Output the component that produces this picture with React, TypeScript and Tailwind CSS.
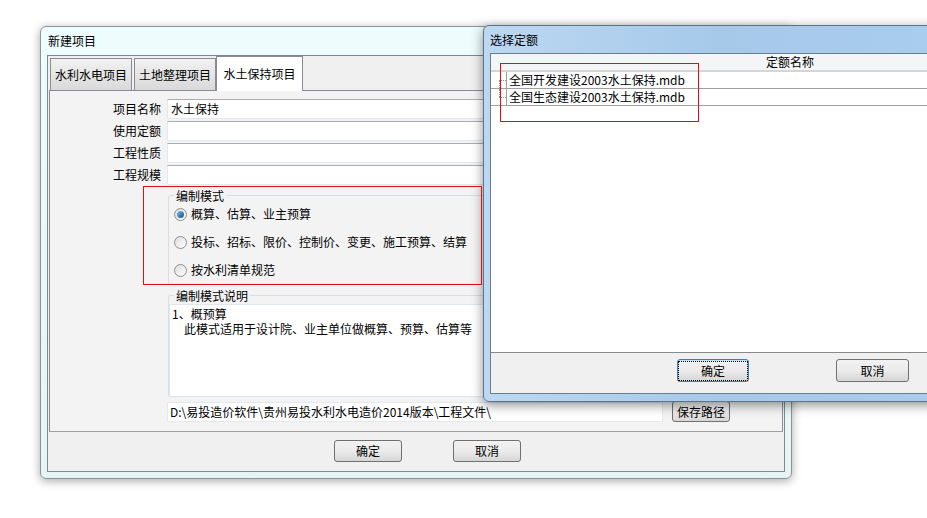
import React from "react";

const font = "font-['Noto_Sans_CJK_SC',sans-serif]";

function WinButton({ label, focused = false, className = "" }: { label: string; focused?: boolean; className?: string }) {
  return (
    <div
      className={`flex items-center justify-center rounded-[3px] border text-[12px] leading-none text-black bg-gradient-to-b from-[#f2f2f2] via-[#ebebeb] to-[#d6d6d6] ${
        focused ? "border-[#3c7fb1] shadow-[inset_0_0_0_1px_#bfe4f8]" : "border-[#707070]"
      } ${className}`}
    >
      <span className={focused ? "outline-1 outline-dotted outline-black px-[22px] py-[3px]" : ""}>{label}</span>
    </div>
  );
}

function Radio({ checked, label }: { checked?: boolean; label: string }) {
  return (
    <div className="flex items-center h-[28px] pl-[5px] gap-[4px]">
      <div className="w-[13px] h-[13px] rounded-full border border-[#8e8f8f] bg-gradient-to-br from-[#dcdcdc] to-[#ffffff] flex items-center justify-center">
        {checked && <div className="w-[7px] h-[7px] rounded-full bg-gradient-to-br from-[#7fc0f0] to-[#0d4c8a]" />}
      </div>
      <span className="text-[12px] text-black">{label}</span>
    </div>
  );
}

function Field({ label, value }: { label: string; value?: string }) {
  return (
    <div className="flex items-center h-[20px] mb-[2px]">
      <div className="w-[112px] text-right text-[12px] text-black pr-[1px]">{label}</div>
      <div className="ml-[5px] w-[612px] h-[20px] bg-white border border-[#e3e9ef] border-t-[#abadb3] flex items-center pl-[3px] text-[12px] text-black">
        {value}
      </div>
    </div>
  );
}

function NewProjectWindow() {
  return (
    <div className="absolute left-[40px] top-[26px] w-[752px] h-[453px] rounded-[6px] border border-[#8c9499] bg-gradient-to-b from-[#eefcfd] to-[#e6f4f6] shadow-[0_2px_10px_rgba(0,0,0,0.35)] flex flex-col">
      <div className="h-[28px] pl-[7px] flex items-center text-[12px] text-black">新建项目</div>
      <div className="mx-[6px] h-[417px] border border-[#7f8890] bg-[#f0f0f0] flex flex-col">
        {/* tabs */}
        <div className="h-[34px] flex items-end pl-[2px]">
          <div className="h-[32px] w-[82px] border border-b-0 border-[#898c95] bg-gradient-to-b from-[#f2f2f2] to-[#d9d9d9] flex items-center justify-center text-[12px]">水利水电项目</div>
          <div className="h-[32px] w-[82px] ml-[2px] border border-b-0 border-[#898c95] bg-gradient-to-b from-[#f2f2f2] to-[#d9d9d9] flex items-center justify-center text-[12px]">土地整理项目</div>
          <div className="relative z-10 -mb-px h-[35px] w-[87px] border border-b-0 border-[#898c95] bg-white flex items-center justify-center text-[12px]">水土保持项目</div>
        </div>
        {/* tab panel */}
        <div className="h-[342px] mx-[1px] border border-[#898c95] border-b-[#a0a0a0] bg-[#f3f3f3] pt-[8px] flex flex-col">
          <Field label="项目名称" value="水土保持" />
          <Field label="使用定额" />
          <Field label="工程性质" />
          <Field label="工程规模" />
          <fieldset className="ml-[118px] w-[610px] h-[98px] border border-[#d5dfe5] rounded-[3px]">
            <legend className="ml-[5px] px-[2px] text-[12px] leading-[17px]">编制模式</legend>
            <div className="-mt-[4px]">
              <Radio checked label="概算、估算、业主预算" />
              <Radio label="投标、招标、限价、控制价、变更、施工预算、结算" />
              <Radio label="按水利清单规范" />
            </div>
          </fieldset>
          <fieldset className="ml-[118px] mt-[2px] w-[610px] border border-[#d5dfe5] border-b-0 rounded-[3px]">
            <legend className="ml-[5px] px-[2px] text-[12px] leading-[17px]">编制模式说明</legend>
            <div className="h-[93px] bg-white border border-[#dfe6ec] pl-[2px] pt-[1px] text-[12px] leading-[15px] text-black">
              <div>1、概预算</div>
              <div className="pl-[12px]">此模式适用于设计院、业主单位做概算、预算、估算等</div>
            </div>
          </fieldset>
          <div className="flex items-center mt-[4px] ml-[117px]">
            <div className="w-[496px] h-[20px] bg-white border border-[#e3e9ef] flex items-center pl-[2px] text-[12px] text-black">
              D:\易投造价软件\贵州易投水利水电造价2014版本\工程文件\
            </div>
            <WinButton label="保存路径" className="ml-[9px] w-[58px] h-[21px] rounded-[2px]" />
          </div>
        </div>
        <div className="flex pt-[8px] pl-[286px] gap-[51px]">
          <WinButton label="确定" className="w-[68px] h-[22px]" />
          <WinButton label="取消" className="w-[68px] h-[22px]" />
        </div>
      </div>
    </div>
  );
}

function SelectQuotaWindow() {
  return (
    <div className="absolute left-[483px] top-[25px] w-[470px] h-[377px] rounded-[6px] border border-[#5d7387] bg-gradient-to-r from-[#bcd8f2] via-[#a6c9ea] to-[#a9cdef] shadow-[0_3px_12px_rgba(0,0,0,0.45)] flex flex-col">
      <div className="h-[27px] pl-[6px] flex items-center text-[12px] text-black">选择定额</div>
      <div className="ml-[6px] h-[341px] border border-[#6b7d8e] bg-[#f0f0f0] flex flex-col">
        <div className="h-[298px] bg-white flex flex-col">
          <div className="h-[18px] bg-[#f4f5f6] border-b-2 border-[#d5d5d5] flex items-center pl-[275px] text-[12px] text-black">定额名称</div>
          {["全国开发建设2003水土保持.mdb", "全国生态建设2003水土保持.mdb"].map((name, i) => (
            <div key={name} className="h-[17px] flex border-b border-[#a0a0a0]">
              <div className="w-[15px] relative">
                <div className="absolute left-[8px] top-[8px] w-[7px] border-t border-dotted border-[#909090]" />
                <div className={`absolute left-[8px] border-l border-dotted border-[#909090] ${i === 0 ? "top-[8px] h-[10px]" : "top-0 h-[8px]"}`} />
              </div>
              <div className="border-l border-[#a0a0a0] pl-[2px] flex items-center text-[12px] text-black">{name}</div>
            </div>
          ))}
        </div>
        <div className="flex-1 border-t border-[#8a8a8a] flex items-start pt-[6px] pl-[186px] gap-[87px]">
          <WinButton label="确定" focused className="w-[72px] h-[23px]" />
          <WinButton label="取消" className="w-[73px] h-[23px]" />
        </div>
      </div>
    </div>
  );
}

export default function App() {
  return (
    <div className={`relative w-[927px] h-[518px] overflow-hidden bg-white ${font}`}>
      <NewProjectWindow />
      <SelectQuotaWindow />
      {/* red annotation boxes */}
      <div className="absolute left-[143px] top-[186px] w-[339px] h-[99px] border border-[#e01010]" />
      <div className="absolute left-[500px] top-[63px] w-[199px] h-[59px] border border-[#e01010]" />
    </div>
  );
}
